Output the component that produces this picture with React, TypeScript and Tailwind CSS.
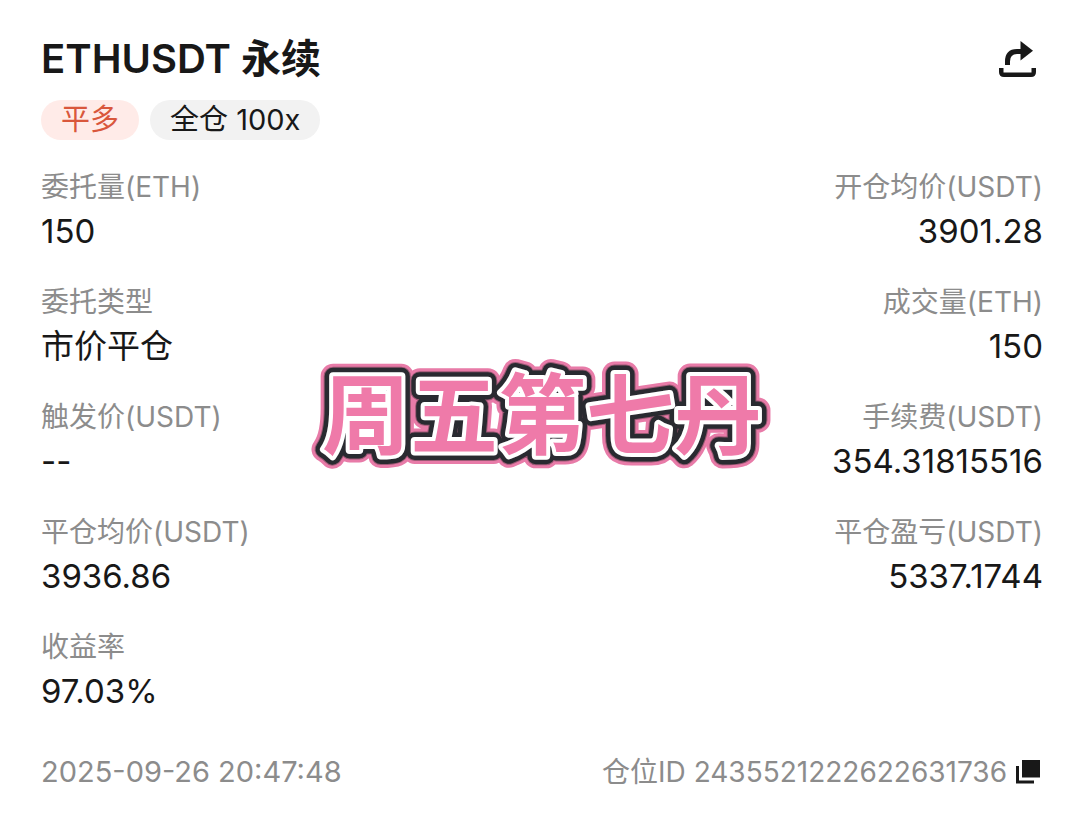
type FieldProps = { label: string; value: string; align?: 'left' | 'right' };

const leftFields = [
  { label: '委托量(ETH)', value: '150' },
  { label: '委托类型', value: '市价平仓' },
  { label: '触发价(USDT)', value: '--' },
  { label: '平仓均价(USDT)', value: '3936.86' },
  { label: '收益率', value: '97.03%' },
];

const rightFields = [
  { label: '开仓均价(USDT)', value: '3901.28' },
  { label: '成交量(ETH)', value: '150' },
  { label: '手续费(USDT)', value: '354.31815516' },
  { label: '平仓盈亏(USDT)', value: '5337.1744' },
];

function Field({ label, value, align = 'left' }: FieldProps) {
  return (
    <div className={align === 'right' ? 'text-right' : 'text-left'}>
      <dt className="text-[28px] leading-10 text-[#8c8c8c]">{label}</dt>
      <dd className="text-[33px] leading-[49px] text-[#181818]">{value}</dd>
    </div>
  );
}

function ShareIcon() {
  return (
    <svg width="38" height="38" viewBox="0 0 38 38" aria-hidden="true">
      <path d="M9.500 25v-3.500Q9.500 11.500 19 11.500h4" fill="none" stroke="#181818" strokeWidth="5" />
      <path d="M22.500 1 35 10.700 22.500 20.500Z" fill="#181818" />
      <path d="M1 28v4q0 5 5 5h27q5 0 5-5v-4h-4.500v4.500h-28V28Z" fill="#181818" />
    </svg>
  );
}

function CopyIcon() {
  return (
    <svg width="24" height="24" viewBox="0 0 24 24" aria-hidden="true">
      <path d="M6 0h18v17.500H6Z" fill="#181818" />
      <path d="M1.500 6v16H18" fill="none" stroke="#181818" strokeWidth="3" />
    </svg>
  );
}

const strokes = [
  { color: '#e87ba8', width: 25 },
  { color: '#9b5974', width: 19 },
  { color: '#292a30', width: 17 },
  { color: '#ffffff', width: 8 },
];

function Sticker() {
  return (
    <svg
      className="pointer-events-none absolute top-1/2 left-1/2 h-40 w-[500px] -translate-x-1/2 -translate-y-1/2"
      viewBox="0 0 500 160"
      role="img"
      aria-label="周五第七丹"
    >
      <g
        className="font-['Noto_Sans_CJK_SC',sans-serif] text-[88px] font-bold"
        textAnchor="middle"
        strokeLinejoin="round"
      >
        {strokes.map((s) => (
          <text key={s.color} x="250" y="118" fill={s.color} stroke={s.color} strokeWidth={s.width}>
            周五第七丹
          </text>
        ))}
        <text x="250" y="118" fill="#ef7aa9">
          周五第七丹
        </text>
      </g>
    </svg>
  );
}

export default function App() {
  return (
    <main className="relative min-h-screen bg-white px-[41px] pt-8 pb-6 font-['Inter','Noto_Sans_CJK_SC',sans-serif]">
      <header className="flex items-start justify-between">
        <h1 className="text-[40px] leading-[54px] font-semibold text-[#181818]">ETHUSDT 永续</h1>
        <button type="button" aria-label="分享" className="mt-2 mr-[7px]">
          <ShareIcon />
        </button>
      </header>

      <div className="mt-[14px] flex gap-[11px] text-[29px] leading-10">
        <span className="rounded-full bg-[#ffebe8] px-5 text-[#d9573c]">平多</span>
        <span className="rounded-full bg-[#f2f2f2] px-5 text-[#181818]">全仓 100x</span>
      </div>

      <div className="mt-[27px] flex justify-between">
        <dl className="flex flex-col gap-[26px]">
          {leftFields.map((f) => (
            <Field key={f.label} label={f.label} value={f.value} />
          ))}
        </dl>
        <dl className="flex flex-col gap-[26px]">
          {rightFields.map((f) => (
            <Field key={f.label} label={f.label} value={f.value} align="right" />
          ))}
        </dl>
      </div>

      <footer className="mt-9 flex items-center justify-between leading-10 text-[#8c8c8c]">
        <time dateTime="2025-09-26T20:47:48" className="text-[29px]">
          2025-09-26 20:47:48
        </time>
        <div className="flex items-center gap-[9px] text-[28px]">
          <span>仓位ID 2435521222622631736</span>
          <button type="button" aria-label="复制" className="mr-[3px]">
            <CopyIcon />
          </button>
        </div>
      </footer>
      <Sticker />
    </main>
  );
}
